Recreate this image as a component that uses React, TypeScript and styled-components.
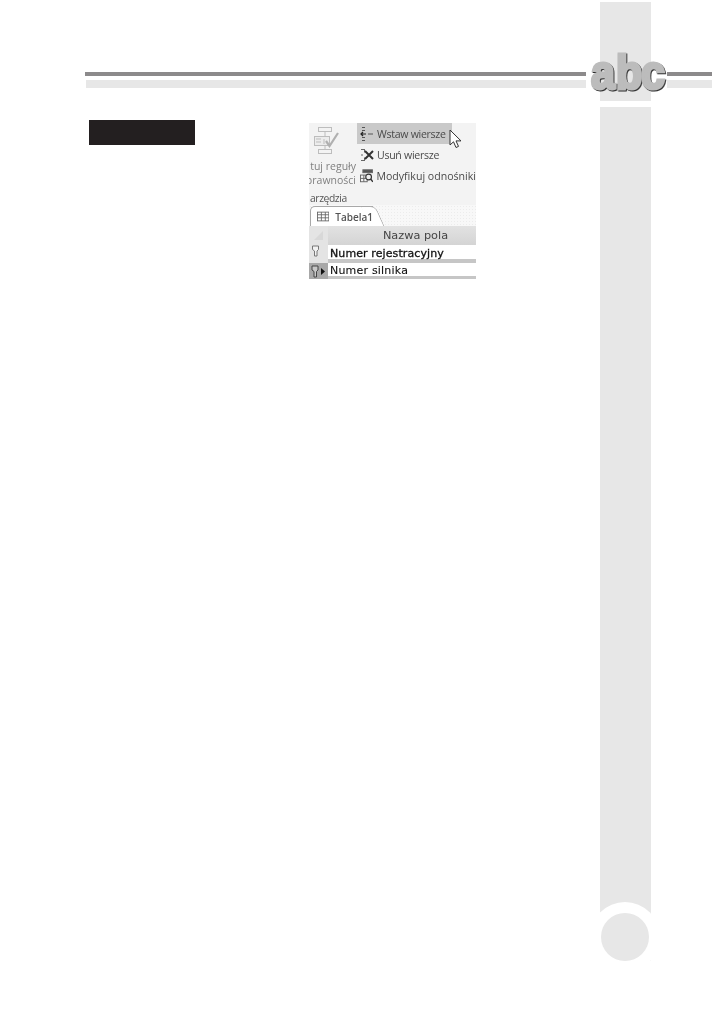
import styled, { createGlobalStyle } from "styled-components";

const Global = createGlobalStyle`
  html, body {
    margin: 0;
    padding: 0;
    background: #fff;
  }
`;

const Page = styled.div`
  position: relative;
  width: 714px;
  height: 1013px;
  display: flex;
  overflow: hidden;
  background: #fff;
`;

const Main = styled.div`
  width: 501px;
  margin-left: 85px;
  padding-top: 72px;
  flex-shrink: 0;
`;

const RuleDark = styled.div`
  height: 4px;
  background: #8c8a8b;
`;

const RuleLight = styled.div`
  height: 8px;
  margin-top: 4px;
  margin-left: ${(p: { $inset?: number }) => p.$inset ?? 0}px;
  background: #e7e7e7;
`;

const Content = styled.div`
  display: flex;
  align-items: flex-start;
  padding: 32px 0 0 4px;
`;

const Label = styled.div`
  width: 106px;
  height: 25px;
  background: #231f20;
  flex-shrink: 0;
`;

const Shot = styled.div`
  width: 167px;
  margin: 3px 0 0 114px;
  background: #f3f3f3;
  overflow: hidden;
  display: flex;
  flex-direction: column;
  filter: blur(0.35px);
  font-family: "Open Sans", sans-serif;
  color: #4a4a4a;
`;

const Ribbon = styled.div`
  height: 82px;
  display: flex;
  position: relative;
`;

const GroupLeft = styled.div`
  width: 47px;
  display: flex;
  flex-direction: column;
  align-items: flex-end;
  flex-shrink: 0;
  color: #808080;
  font-size: 10.5px;
  line-height: 14px;
  overflow: hidden;
`;

const RuleIcon = styled.svg`
  margin: 4px 17px 5px 0;
  flex-shrink: 0;
`;

const ClipLine = styled.div`
  white-space: nowrap;
`;

const GroupName = styled.div`
  position: absolute;
  left: 1px;
  top: 68px;
  font-size: 10.3px;
  line-height: 14px;
  letter-spacing: -0.4px;
  color: #555;
`;

const Commands = styled.div`
  margin-left: 1px;
  display: flex;
  flex-direction: column;
  flex: 1;
  min-width: 0;
`;

const Command = styled.div<{ $active?: boolean; $tight?: boolean }>`
  height: 21px;
  width: ${(p) => (p.$active ? "95px" : "auto")};
  box-sizing: border-box;
  display: flex;
  align-items: center;
  gap: 3px;
  padding-left: 3px;
  white-space: nowrap;
  font-size: 10.6px;
  letter-spacing: ${(p) => (p.$tight ? "-0.3px" : "0")};
  background: ${(p) => (p.$active ? "#c9c9c9" : "transparent")};
`;

const Cursor = styled.svg`
  position: absolute;
  left: 140px;
  top: 6px;
`;

const TabStrip = styled.div`
  height: 21px;
  display: flex;
  align-items: flex-end;
  padding-left: 1px;
  background-color: #f8f8f8;
  background-image: radial-gradient(#ececec 0.6px, transparent 0.8px);
  background-size: 3px 3px;
`;

const Tab = styled.div`
  position: relative;
  width: 63px;
  height: 20px;
  display: flex;
  align-items: center;
  gap: 6px;
  padding-left: 6px;
  box-sizing: border-box;
  background: #fff;
  border: 1px solid #a8a8a8;
  border-right: none;
  border-bottom: none;
  border-radius: 5px 0 0 0;
  font-size: 10px;
  font-weight: 600;
  color: #555;

  &::after {
    content: "";
    position: absolute;
    left: 54px;
    top: -1px;
    bottom: 0;
    width: 14px;
    background: #fff;
    border-top: 1px solid #a8a8a8;
    border-right: 1px solid #a8a8a8;
    border-radius: 0 6px 0 0;
    transform: skewX(24deg);
  }
`;

const TabGlyph = styled.svg`
  position: relative;
  z-index: 1;
`;

const TabLabel = styled.span`
  position: relative;
  z-index: 1;
`;

const HeaderRow = styled.div`
  height: 19px;
  display: flex;
  background: linear-gradient(#e2e2e2, #d4d4d4);
`;

const HeaderCorner = styled.div`
  width: 19px;
  display: flex;
  align-items: center;
  justify-content: center;
  background: #e4e4e4;
`;

const HeaderCell = styled.div`
  flex: 1;
  text-align: center;
  padding-left: 27px;
  font-family: "DejaVu Sans", sans-serif;
  font-size: 11.3px;
  line-height: 19px;
  color: #444;
`;

const Row = styled.div<{ $height: number }>`
  height: ${(p) => p.$height}px;
  display: flex;
`;

const RowHead = styled.div<{ $current?: boolean }>`
  width: 19px;
  flex-shrink: 0;
  display: flex;
  align-items: ${(p) => (p.$current ? "center" : "flex-start")};
  padding-left: ${(p) => (p.$current ? "2px" : "3px")};
  box-sizing: border-box;
  background: ${(p) => (p.$current ? "#a8a8a8" : "#e4e4e4")};
`;

const FieldName = styled.div<{ $bold?: boolean; $band: number }>`
  flex: 1;
  padding-left: 2px;
  box-sizing: border-box;
  background: #fff;
  border-bottom: ${(p) => p.$band}px solid #c6c6c6;
  color: #111;
  white-space: nowrap;
  font-family: "DejaVu Sans", sans-serif;
  font-size: 11px;
  line-height: ${(p) => (p.$bold ? "18px" : "15px")};
  letter-spacing: ${(p) => (p.$bold ? "0.1px" : "0.2px")};
  -webkit-text-stroke: ${(p) => (p.$bold ? "0.3px #111" : "0.1px #111")};
`;

const Sidebar = styled.div`
  position: relative;
  width: 51px;
  height: 959px;
  margin: 2px 0 0 14px;
  flex-shrink: 0;
  display: flex;
  flex-direction: column;
  gap: 6px;
`;

const SideTop = styled.div`
  height: 99px;
  background: #e7e7e7;
`;

const SideLong = styled.div`
  flex: 1;
  background: #e7e7e7;
`;

const PageBadge = styled.div`
  position: absolute;
  left: -10px;
  bottom: -11px;
  width: 70px;
  height: 70px;
  border-radius: 50%;
  background: #fff;
  display: flex;
  align-items: center;
  justify-content: center;
`;

const PageDisc = styled.div`
  width: 48px;
  height: 48px;
  border-radius: 50%;
  background: #e7e7e7;
`;

const RightRule = styled.div`
  width: 45px;
  margin-left: 16px;
  padding-top: 72px;
  flex-shrink: 0;
`;

const Logo = styled.div`
  position: absolute;
  left: 591px;
  top: 44px;
  display: flex;
  font-family: "Liberation Sans", sans-serif;
  font-weight: 700;
  font-size: 49px;
  line-height: 56px;
`;

const LogoLetter = styled.span`
  display: block;
  width: 24.8px;
  color: #bcbcbc;
  -webkit-text-stroke: 3.2px #bcbcbc;
  filter: drop-shadow(1px 1px 0 #2e2e2e);
  transform: scaleX(0.88);
  transform-origin: left center;
`;

function App() {
  return (
    <Page>
      <Global />
      <Main>
        <RuleDark />
        <RuleLight $inset={1} />
        <Content>
          <Label />
          <Shot>
            <Ribbon>
              <GroupLeft>
                <RuleIcon width="26" height="27" viewBox="0 0 26 27" fill="none" stroke="#bdbdbd" strokeWidth="1">
                  <rect x="5.500" y="0.500" width="13" height="4" />
                  <rect x="1.500" y="9.500" width="15" height="9" fill="#ececec" />
                  <path d="M3 12h5M3 15h5M11 12v5M12 4.500v5M12 18.500v4" />
                  <rect x="5.500" y="22.500" width="13" height="4" />
                  <path d="M13 14l3.500 5L25 6" stroke="#b0b0b0" strokeWidth="2.200" />
                </RuleIcon>
                <ClipLine>tuj reguły</ClipLine>
                <ClipLine>poprawności</ClipLine>
              </GroupLeft>
              <GroupName>arzędzia</GroupName>
              <Commands>
                <Command $active $tight>
                  <svg width="14" height="16" viewBox="0 0 14 16" fill="none" stroke="#555" strokeWidth="1">
                    <path d="M2 1.500h3M2 4.500h3M2 11.500h3M2 14.500h3M8 8h5" />
                    <path d="M1 8h5M3 6l-2 2 2 2" stroke="#222" strokeWidth="1.200" />
                  </svg>
                  Wstaw wiersze
                </Command>
                <Command $tight>
                  <svg width="14" height="14" viewBox="0 0 14 14" fill="none" stroke="#666" strokeWidth="1">
                    <path d="M1 1.500h4M4.500 1.500v3M1 12.500h4M4.500 12.500v-3M1 7h2" />
                    <path d="M5 3l8 8M13 3l-8 8" stroke="#333" strokeWidth="2" />
                  </svg>
                  Usuń wiersze
                </Command>
                <Command>
                  <svg width="14" height="14" viewBox="0 0 14 14" fill="none" stroke="#666" strokeWidth="1">
                    <rect x="3" y="0.500" width="10" height="3" fill="#555" />
                    <rect x="0.500" y="6" width="7" height="7" />
                    <path d="M0.500 9.500h7M4 6v7" />
                    <circle cx="9" cy="8" r="3" fill="#eee" stroke="#333" strokeWidth="1.200" />
                    <path d="M11 10l2.500 3" stroke="#333" strokeWidth="1.600" />
                  </svg>
                  Modyfikuj odnośniki
                </Command>
              </Commands>
              <Cursor width="13" height="20" viewBox="0 0 13 20">
                <path d="M1 1v15l3.500-3.200 2.500 5.700 2.500-1.100-2.500-5.500H12z" fill="#fff" stroke="#333" strokeWidth="1" />
              </Cursor>
            </Ribbon>
            <TabStrip>
              <Tab>
                <TabGlyph width="14" height="11" viewBox="0 0 14 11" fill="none" stroke="#666" strokeWidth="1">
                  <rect x="0.500" y="0.500" width="13" height="10" fill="#fff" />
                  <path d="M0.500 3.500h13M0.500 7h13M5 0.500v10M9.500 0.500v10" />
                </TabGlyph>
                <TabLabel>Tabela1</TabLabel>
              </Tab>
            </TabStrip>
            <HeaderRow>
              <HeaderCorner>
                <svg width="11" height="11" viewBox="0 0 11 11">
                  <path d="M1 10L10 1v9z" fill="#d8d8d8" />
                </svg>
              </HeaderCorner>
              <HeaderCell>Nazwa pola</HeaderCell>
            </HeaderRow>
            <Row $height={18}>
              <RowHead>
                <svg width="7" height="12" viewBox="0 0 7 12" fill="none" stroke="#777" strokeWidth="1">
                  <path d="M0.500 1h6v3.500L5 6v5H2.500V6L0.500 4.500z" fill="#f2f2f2" />
                </svg>
              </RowHead>
              <FieldName $bold $band={4}>Numer rejestracyjny</FieldName>
            </Row>
            <Row $height={16}>
              <RowHead $current>
                <svg width="15" height="13" viewBox="0 0 15 13" fill="none" stroke="#444" strokeWidth="1">
                  <path d="M1 1h6v4L5.500 6.500V12H3V6.500L1 5z" fill="#c8c8c8" />
                  <path d="M10 3l4 3.500L10 10z" fill="#111" stroke="none" />
                </svg>
              </RowHead>
              <FieldName $band={3}>Numer silnika</FieldName>
            </Row>
          </Shot>
        </Content>
      </Main>
      <Sidebar>
        <SideTop />
        <SideLong />
        <PageBadge>
          <PageDisc />
        </PageBadge>
      </Sidebar>
      <RightRule>
        <RuleDark />
        <RuleLight />
      </RightRule>
      <Logo>
        <LogoLetter>a</LogoLetter>
        <LogoLetter>b</LogoLetter>
        <LogoLetter>c</LogoLetter>
      </Logo>
    </Page>
  );
}

export default App;
